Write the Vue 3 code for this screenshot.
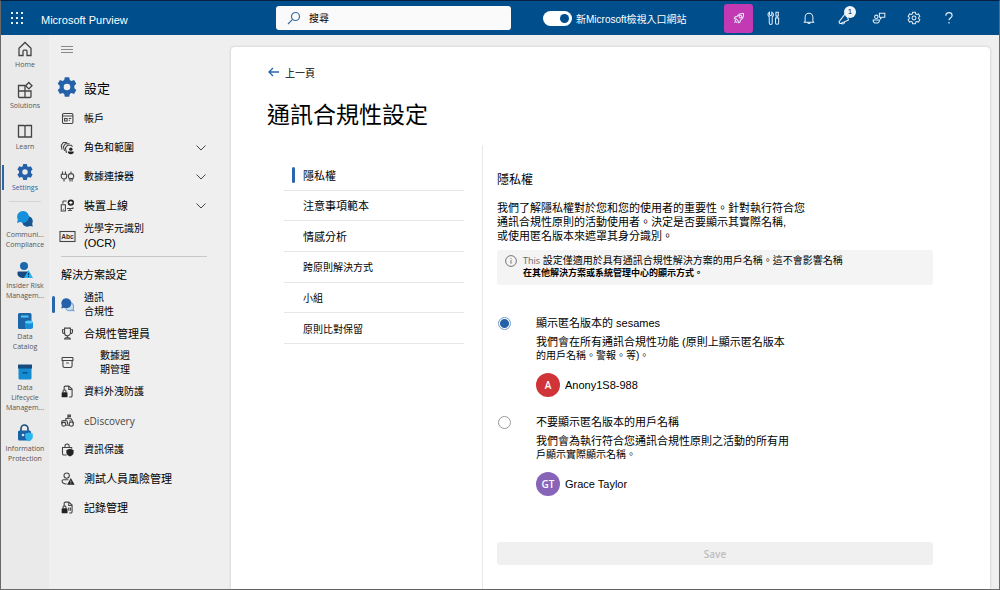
<script setup>
import { ref } from 'vue'

const icons = {
  home: '<path d="M3 8.200 9 2.500l6 5.700V15.500h-4v-4.300a1 1 0 0 0-1-1H8a1 1 0 0 0-1 1v4.300H3z"/>',
  solutions: '<path d="M2.500 4.500h6.500v12h-5.500a1 1 0 0 1-1-1zM2.500 10h6.500M9 10h6v5.500a1 1 0 0 1-1 1H9M9 10V8"/><path d="m12.800 1.500 3.200 3.200-3.200 3.200-3.200-3.200z"/>',
  learn: '<path d="M2.500 3.500H8a1 1 0 0 1 1 1v10.500H2.500zM9 4.500a1 1 0 0 1 1-1h5.500V15H9"/>',
  gear: '<g fill="#2461a8" stroke="none"><path fill-rule="evenodd" d="M7.200 1h3.600l.5 2.200 1.300.8 2.200-.7 1.800 3.100L15 8v2l1.600 1.500-1.800 3.200-2.200-.7-1.300.7-.5 2.300H7.200l-.5-2.300-1.300-.7-2.200.7-1.800-3.200L3 10V8L1.400 6.400l1.800-3.100 2.200.7 1.300-.8zM9 6.300a2.700 2.700 0 1 0 0 5.400 2.700 2.700 0 0 0 0-5.400z"/></g>',
  bubbles: '<g stroke="none"><path fill="#17568f" d="M11.500 6a5.300 5.300 0 0 1 4.700 7.700l.6 2.800-2.900-.6A5.300 5.300 0 1 1 11.500 6z"/><path fill="#1790dc" d="M7 1a5.900 5.900 0 1 1-2.700 11.100L1 13l.8-3.300A5.900 5.900 0 0 1 7 1z"/></g>',
  insider: '<g stroke="none"><circle cx="8" cy="5" r="4" fill="#1b69ad"/><path fill="#164a80" d="M2.500 10.500H13v3c0 2-2 3.500-5.200 3.500S1.500 15.500 1.500 13v-1.500a1 1 0 0 1 1-1z"/><path fill="#28b4ee" d="m12.500 9 4.500 8H8z"/><path d="M12.500 12v2.200M12.500 15v1" stroke="#083b63"/></g>',
  catalog: '<g stroke="none"><path fill="#1b65a8" d="M3.500 1H14a1.500 1.500 0 0 1 1.500 1.500V9H10v8H3.500A1.500 1.500 0 0 1 2 15.500v-13A1.500 1.500 0 0 1 3.500 1z"/><path fill="#50c8f4" d="M5 3.500h7.500v2H5z"/><path fill="#1590d8" d="M9 10v5.500c0 2 8 2 8 0V10z"/><ellipse cx="13" cy="10" rx="4" ry="1.600" fill="#54cdf6"/></g>',
  lifecycle: '<g stroke="none"><path fill="#158bd2" d="M2.500 5h13v10a1.500 1.500 0 0 1-1.500 1.500H4A1.500 1.500 0 0 1 2.500 15z"/><path fill="#174b7e" d="M2.500 1.500h13A.5.5 0 0 1 16 2v3.500H2V2a.5.5 0 0 1 .5-.5z"/><path fill="#0d4f86" d="M6.500 9h5v1.500h-5z"/></g>',
  protection: '<path d="M5 7V4.500a3.500 3.500 0 0 1 7 0V7" stroke="#174b7e" stroke-width="1.600"/><g stroke="none"><rect x="2" y="6.500" width="13" height="10" rx="1.500" fill="#1a62a5"/><circle cx="7" cy="11" r="1.300" fill="#cde9f8"/><path fill="#2db5ee" d="m13 8.500 3.800 1v3.500c0 2-1.800 3.500-3.800 4.300-2-.8-3.800-2.300-3.800-4.300V9.500z"/></g>',
  account: '<rect x="3" y="3" width="12.500" height="12" rx="1.500"/><path d="M3 6h12.500M5.500 9h3v3h-3zM10.500 9h3M10.500 11h1.500"/>',
  roles: '<path d="M2.500 11.500 1.500 6.500 4 3h4.500M5.500 13 4 8l2.500-3.500h5M8.500 14.500h-1L6.500 9.500 9 6.200h4.500L15 8"/><g fill="#222" stroke="none"><circle cx="13" cy="11" r="2"/><path d="M9.500 13.800h7c.3 2-1.300 3.400-3.500 3.400s-3.800-1.400-3.500-3.400z"/></g>',
  connectors: '<path d="M3 3v3M6.500 3v3M1.500 6.200h6.500V9c0 1.500-1.200 3-3.200 3S1.500 10.500 1.500 9zM4.800 12v3M13.200 3v2.500M10 9c0-2 1.200-3.500 3.200-3.500S16.500 7 16.500 9l-1 2.500h-4.500zM12 11.500V15M14.500 11.500V15"/>',
  devices: '<path d="M8 3.500H4.500a1 1 0 0 0-1 1V7M1.500 8h5v7.500h-5zM3.500 13.500h1M8.500 12.500h7v-1.500M12 12.500v2.500M9.500 15h5"/><circle cx="13" cy="5.500" r="3.800" fill="#222" stroke="none"/><path d="M13 3.500v4M11 5.500h4" stroke="#fff"/>',
  trophy: '<path d="M5.500 2.500h7v5.800a3.500 3.500 0 0 1-7 0zM5.500 4.500h-2.500v2c0 1.500 1 2.500 2.700 2.500M12.500 4.500H15v2c0 1.500-1 2.500-2.700 2.500M9 12v2.500M5.500 15.500c0-1 1-1.500 2-1.500h3c1 0 2 .5 2 1.500z"/>',
  archive: '<path d="M3 3h12a.5.5 0 0 1 .5.5v3h-13v-3A.5.500 0 0 1 3 3zM3.500 6.500h11V13a2 2 0 0 1-2 2h-7a2 2 0 0 1-2-2zM7.500 9.500h3"/>',
  dlp: '<path d="M5 8V4a1.500 1.500 0 0 1 1.500-1.500h4L14.500 6v8a1.500 1.500 0 0 1-1.500 1.500h-2M10.500 2.500v4h4M3.700 10V8.500a1.700 1.700 0 0 1 3.400 0V10"/><rect x="2" y="10" width="7" height="6" rx=".8" fill="#222" stroke="none"/>',
  ediscovery: '<path d="M2 13v-2.500c0-1 .8-1.500 2-1.500h3c1.500 0 2 .8 2 2v2.500M7 9V6.500h2.500l4 .5 3 5.500M9.500 6.500V2.500h3v1.800h-3M2.500 11h5M11 9.500h2.500"/><circle cx="4.500" cy="13.500" r="2.300"/><circle cx="13.500" cy="13.300" r="2.500"/><path d="M6.500 14.500H11"/>',
  infoProtect: '<path d="M8 15.500H4.500a1.500 1.500 0 0 1-1.500-1.500V6.500h11V8M6 6.500V4.800a2.500 2.500 0 0 1 5 0v1.700"/><path fill="#222" stroke="none" d="m12 8.200 4.300 1.300v3.500c0 2-2 3.500-4.300 4.400-2.300-.9-4.300-2.400-4.300-4.400V9.500z"/>',
  insiderLine: '<circle cx="8" cy="5.500" r="3.200"/><path d="M10 10.500H4A1.500 1.500 0 0 0 2.500 12c0 2.500 2.500 3.500 5.500 3.500"/><path fill="#222" stroke="none" d="m13 8.500 4.500 8h-9z"/><path d="M13 11.500v2.300M13 14.600v.9" stroke="#fff" stroke-width=".8"/>',
  records: '<path d="M5 8V4a1.500 1.500 0 0 1 1.500-1.500h4L14.500 6v8a1.500 1.500 0 0 1-1.500 1.500h-2M10.500 2.500v4h4M10.500 9v4M12.500 9v4M3.700 10V8.500a1.700 1.700 0 0 1 3.400 0V10"/><rect x="2" y="10" width="7" height="6" rx=".8" fill="#222" stroke="none"/>',
  navBubbles: '<path d="M12 6.500a5 5 0 0 1 3.800 7.200l.7 2.800-2.800-.7A5 5 0 0 1 7 14" stroke="#6ea0d2" fill="#c9ddef"/><path fill="#2461a8" stroke="none" d="M7.500 1.500a6 6 0 1 1-2.700 11.300L1.500 13.700l.8-3.200A6 6 0 0 1 7.500 1.500z"/>',
  abc: '<rect x="0" y="3" width="18" height="12" stroke-width="1.300"/>',
  rocket: '<path d="M14.800 3.200c-4-.4-6.600.8-8.500 4L4 7.500 3 9.800l2.500.4 2.300 2.300.4 2.500 2.300-1 .3-2.300c3.200-1.900 4.400-4.500 4-8.500zM3.500 12.500l1.500-1M3 15l2.500-2M5.500 15l1-1"/><circle cx="10.800" cy="7.200" r="1.700"/>',
  tools: '<path d="M3.200 1.500v3.500l1.500 1 1.500-1v-3.500c1.500.7 2.300 2.200 2 3.700-.2 1-.8 1.700-1.500 2.100V15.500a1.300 1.300 0 0 1-3.800 0V7.300C2 6.900 1.400 6.200 1.300 5.200c-.2-1.500.4-3 1.900-3.700zM11.500 1.500h3V6.500h-3zM13 6.500V9M11 9h4v6.500a1.500 1.500 0 0 1-1.500 1.500h-1a1.500 1.500 0 0 1-1.500-1.500z"/>',
  bell: '<path d="M4 13V8a5 5 0 0 1 10 0v5l1 1.500H3zM7.500 14.700a1.500 1.500 0 0 0 3 0"/>',
  megaphone: '<path d="M11 3 2.500 14l1.200 2.200L15 11.500M11 3l4 8.500M6 15.500c.3 1.800 4 1.500 3.800-1.500"/>',
  people: '<circle cx="5.500" cy="7.500" r="2.200"/><path d="M1.500 11.500h8c.3 2.600-1.500 4-4 4s-4.300-1.400-4-4zM9.500 3h7v5h-3.500L11 10V8H9.500z"/>',
  gearLine: '<path d="M7.300 1.500h3.400l.5 2.200 1.400.8 2.200-.7 1.700 3L15 8.200v1.600l1.500 1.400-1.700 3-2.200-.7-1.400.8-.5 2.200H7.300l-.5-2.200-1.400-.8-2.200.7-1.700-3L3 9.800V8.200L1.500 6.800l1.700-3 2.200.7 1.400-.8z"/><circle cx="9" cy="9" r="2.500"/>',
  help: '<path d="M5 6C5 3.500 6.700 2 9 2s4 1.500 4 3.700c0 3.300-4 3.300-4 6.300M9 14.200v1.800" stroke-width="1.500"/>'
}

const rail = [
  { icon: 'home', lines: ['Home'] },
  { icon: 'solutions', lines: ['Solutions'] },
  { icon: 'learn', lines: ['Learn'] },
  { icon: 'gear', lines: ['Settings'], active: true },
  { divider: true },
  { icon: 'bubbles', lines: ['Communi...', 'Compliance'] },
  { icon: 'insider', lines: ['Insider Risk', 'Managem...'] },
  { icon: 'catalog', lines: ['Data', 'Catalog'] },
  { icon: 'lifecycle', lines: ['Data', 'Lifecycle', 'Managem...'] },
  { icon: 'protection', lines: ['Information', 'Protection'] }
]

const general = [
  { icon: 'account', lines: ['帳戶'] },
  { icon: 'roles', lines: ['角色和範圍'], more: true },
  { icon: 'connectors', lines: ['數據連接器'], more: true },
  { icon: 'devices', lines: ['裝置上線'], more: true, wide: true },
  { icon: 'abc', lines: ['光學字元識別', '(OCR)'], tall: true }
]

const solutions = [
  { icon: 'navBubbles', lines: ['通訊', '合規性'], active: true },
  { icon: 'trophy', lines: ['合規性管理員'], wide: true },
  { icon: 'archive', lines: ['數據週', '期管理'], inset: true },
  { icon: 'dlp', lines: ['資料外洩防護'] },
  { icon: 'ediscovery', lines: ['eDiscovery'], latin: true },
  { icon: 'infoProtect', lines: ['資訊保護'] },
  { icon: 'insiderLine', lines: ['測試人員風險管理'], wide: true },
  { icon: 'records', lines: ['記錄管理'], wide: true }
]

const tabs = [
  { label: '隱私權', wide: true, active: true },
  { label: '注意事項範本', wide: true },
  { label: '情感分析', wide: true },
  { label: '跨原則解決方式' },
  { label: '小組' },
  { label: '原則比對保留' }
]

const actions = [
  { icon: 'rocket', label: 'Rocket', hot: true },
  { icon: 'tools', label: 'Tools' },
  { icon: 'bell', label: 'Notifications' },
  { icon: 'megaphone', label: 'News', badge: '1' },
  { icon: 'people', label: 'Feedback' },
  { icon: 'gearLine', label: 'Settings' },
  { icon: 'help', label: 'Help' }
]

const newPortal = ref(true)
const privacy = ref('anonymous')
</script>

<template>
  <div class="page">
    <header class="topbar">
      <button class="waffle" aria-label="App launcher">
        <svg width="12" height="12" viewBox="0 0 12 12" fill="#e6eff7">
          <template v-for="r in 3" :key="r">
            <rect v-for="c in 3" :key="c" :x="c * 5 - 5" :y="r * 5 - 5" width="2" height="2" />
          </template>
        </svg>
      </button>
      <span class="brand">Microsoft Purview</span>
      <label class="search">
        <svg width="14" height="14" viewBox="0 0 14 14" fill="none" stroke="#3a6ea5" stroke-width="1.200">
          <circle cx="8.500" cy="5.500" r="4" /><path d="M5.600 8.400 1 13" />
        </svg>
        <input type="search" placeholder="搜尋" aria-label="搜尋" />
      </label>
      <label class="portal">
        <input v-model="newPortal" type="checkbox" role="switch" class="switch" />
        <span>新Microsoft檢視入口網站</span>
      </label>
      <div class="actions">
        <button v-for="a in actions" :key="a.icon" class="action" :class="{ hot: a.hot }" :aria-label="a.label">
          <svg width="14" height="14" viewBox="0 0 18 18" class="line" v-html="icons[a.icon]" />
          <span v-if="a.badge" class="badge">{{ a.badge }}</span>
        </button>
      </div>
    </header>

    <div class="body">
      <nav class="rail" aria-label="Purview">
        <template v-for="(item, i) in rail" :key="i">
          <hr v-if="item.divider" class="rail-divider" />
          <a v-else href="#" class="rail-item" :class="{ active: item.active }">
            <svg width="18" height="18" viewBox="0 0 18 18" class="line" v-html="icons[item.icon]" />
            <span v-for="line in item.lines" :key="line">{{ line }}</span>
          </a>
        </template>
      </nav>

      <nav class="side" aria-label="設定">
        <button class="burger" aria-label="Menu"><i></i><i></i><i></i></button>
        <h2 class="side-title">
          <svg width="22" height="22" viewBox="0 0 18 18" v-html="icons.gear" />
          <span>設定</span>
        </h2>
        <a v-for="item in general" :key="item.icon" href="#" class="side-item" :class="{ wide: item.wide, tall: item.tall }">
          <svg width="15" height="15" viewBox="0 0 18 18" class="line">
            <g v-html="icons[item.icon]" />
            <text v-if="item.icon === 'abc'" x="9" y="12" class="abc">Abc</text>
          </svg>
          <span class="side-text"><span v-for="line in item.lines" :key="line">{{ line }}</span></span>
          <svg v-if="item.more" class="chevron" width="10" height="6" viewBox="0 0 10 6"><path d="m.5.500 4.500 4.500L9.500.5" /></svg>
        </a>
        <hr class="side-divider" />
        <h3 class="side-group">解決方案設定</h3>
        <a v-for="item in solutions" :key="item.icon" href="#" class="side-item" :class="{ wide: item.wide, active: item.active, inset: item.inset, latin: item.latin }">
          <svg width="15" height="15" viewBox="0 0 18 18" class="line" v-html="icons[item.icon]" />
          <span class="side-text"><span v-for="line in item.lines" :key="line">{{ line }}</span></span>
        </a>
      </nav>

      <main class="card">
        <a href="#" class="back">
          <svg width="11" height="10" viewBox="0 0 11 10" fill="none" stroke="#2a66ab" stroke-width="1.300"><path d="M11 5H1M5 1 1 5l4 4" /></svg>
          <span>上一頁</span>
        </a>
        <h1>通訊合規性設定</h1>
        <div class="columns">
          <ul class="tabs">
            <li v-for="t in tabs" :key="t.label">
              <a href="#" :class="{ wide: t.wide, active: t.active }">{{ t.label }}</a>
            </li>
          </ul>
          <form class="pane" @submit.prevent>
            <h2>隱私權</h2>
            <p class="intro">
              我們了解隱私權對於您和您的使用者的重要性。針對執行符合您<br />通訊合規性原則的活動使用者。決定是否要顯示其實際名稱,<br />或使用匿名版本來遮罩其身分識別。
            </p>
            <div class="note">
              <svg width="12" height="12" viewBox="0 0 12 12" fill="none" stroke="#777"><circle cx="6" cy="6" r="5.400" /><path d="M6 5.200v3.500M6 3.200v1" /></svg>
              <p><span class="this">This</span> 設定僅適用於具有通訊合規性解決方案的用戶名稱。這不會影響名稱<br /><b>在其他解決方案或系統管理中心的顯示方式。</b></p>
            </div>
            <div class="option">
              <input id="anon" v-model="privacy" type="radio" name="privacy" value="anonymous" />
              <div>
                <label for="anon">顯示匿名版本的 sesames</label>
                <p>我們會在所有通訊合規性功能 (原則上顯示匿名版本<span class="tight">的用戶名稱。警報。等)。</span></p>
                <div class="person"><span class="avatar red">A</span>Anony1S8-988</div>
              </div>
            </div>
            <div class="option">
              <input id="named" v-model="privacy" type="radio" name="privacy" value="named" />
              <div>
                <label for="named">不要顯示匿名版本的用戶名稱</label>
                <p>我們會為執行符合您通訊合規性原則之活動的所有用<span class="tight">戶顯示實際顯示名稱。</span></p>
                <div class="person"><span class="avatar purple">GT</span>Grace Taylor</div>
              </div>
            </div>
            <button type="submit" class="save" disabled>Save</button>
          </form>
        </div>
      </main>
    </div>
  </div>
</template>

<style>
body {
  margin: 0;
  background: #efefef;
}
</style>

<style scoped>
* {
  box-sizing: border-box;
}
.page {
  min-height: 100vh;
  display: flex;
  flex-direction: column;
  border: 1px solid #6a6a6a;
  border-top-color: #04213f;
  background: #efefef;
  color: #000;
  font-family: "Liberation Sans", "Noto Sans CJK TC", sans-serif;
  font-size: 11px;
}
button {
  font: inherit;
  border: 0;
  padding: 0;
  background: none;
}
a {
  color: inherit;
  text-decoration: none;
}
h1, h2, h3, p, ul {
  margin: 0;
  padding: 0;
  font-weight: 400;
  list-style: none;
}
.line {
  fill: none;
  stroke: currentColor;
  stroke-width: 1.300;
  overflow: visible;
}

.topbar {
  display: flex;
  align-items: center;
  height: 34px;
  padding-right: 36px;
  background: #004e8c;
  color: #fff;
}
.waffle {
  display: flex;
  width: 40px;
  padding-left: 10px;
}
.brand {
  width: 235px;
  padding-top: 4px;
}
.search {
  display: flex;
  align-items: center;
  gap: 8px;
  width: 235px;
  height: 24px;
  padding-left: 11px;
  border-radius: 3px;
  background: #fafafa;
}
.search input {
  flex: 1;
  min-width: 0;
  border: 0;
  padding: 0;
  outline: 0;
  background: none;
  font: inherit;
  font-size: 10px;
}
.search input::placeholder {
  color: #000;
  opacity: 1;
}
.portal {
  display: flex;
  align-items: center;
  gap: 4px;
  margin-left: 32px;
  font-size: 10px;
}
.switch {
  appearance: none;
  display: flex;
  align-items: center;
  justify-content: flex-start;
  width: 29px;
  height: 15px;
  margin: 0;
  padding: 0 3px;
  border-radius: 8px;
  background: #fff;
}
.switch::before {
  content: "";
  width: 9px;
  height: 9px;
  border-radius: 50%;
  background: #004e8c;
}
.switch:checked {
  justify-content: flex-end;
}
.actions {
  display: flex;
  gap: 6px;
  margin-left: auto;
}
.action {
  position: relative;
  display: flex;
  align-items: center;
  justify-content: center;
  width: 29px;
  height: 29px;
  border-radius: 3px;
  color: #e6eff7;
}
.action.hot {
  background: #c239b3;
}
.badge {
  position: absolute;
  top: 2px;
  right: 2px;
  width: 12px;
  height: 12px;
  border-radius: 50%;
  background: #eef5fb;
  color: #222;
  font-size: 8px;
  line-height: 12px;
}

.body {
  flex: 1;
  display: flex;
}
.rail {
  width: 48px;
  flex: none;
  display: flex;
  flex-direction: column;
  gap: 11px;
  padding-top: 5px;
  background: #eaeaea;
}
.rail-item {
  position: relative;
  display: flex;
  flex-direction: column;
  align-items: center;
  color: #555;
  font-family: "Open Sans", sans-serif;
  font-size: 7px;
  line-height: 10px;
  white-space: nowrap;
}
.rail-item svg {
  margin-bottom: 2px;
  color: #444;
}
.rail-item.active {
  color: #2461a8;
}
.rail-item.active::before {
  content: "";
  position: absolute;
  left: 1px;
  top: 2px;
  width: 2px;
  height: 25px;
  background: #2a66ab;
}
.rail-divider {
  width: 32px;
  height: 1px;
  margin: -3px auto;
  border: 0;
  background: #d4d4d4;
}

.side {
  width: 182px;
  flex: none;
  padding: 11px 24px 0 12px;
}
.burger {
  display: flex;
  flex-direction: column;
  gap: 2px;
  width: 12px;
}
.burger i {
  height: 1px;
  background: #888;
}
.side-title {
  display: flex;
  align-items: center;
  gap: 6px;
  height: 30px;
  margin: 19px 0 2px -5px;
  font-size: 13px;
}
.side-item {
  position: relative;
  display: flex;
  align-items: center;
  gap: 9px;
  height: 29px;
  margin-left: -1px;
  padding-right: 1px;
  font-size: 10px;
  line-height: 14px;
}
.side-item.wide {
  font-size: 11px;
}
.side-item.tall {
  height: 32px;
  line-height: 15px;
}
.side-item svg {
  flex: none;
  color: #444;
}
.side-item.tall .side-text span:last-child {
  font-size: 11px;
}
.side-item.inset .side-text {
  padding-left: 16px;
}
.side-item.latin {
  color: #444;
  font-family: "Open Sans", sans-serif;
}
.side-item.active::before {
  content: "";
  position: absolute;
  left: -8px;
  top: 6px;
  width: 3px;
  height: 17px;
  border-radius: 2px;
  background: #2a66ab;
}
.side-text {
  display: flex;
  flex-direction: column;
}
.chevron {
  margin-left: auto;
  fill: none;
  stroke: currentColor;
}
.abc {
  fill: #333;
  stroke: none;
  font-size: 8px;
  font-weight: 700;
  text-anchor: middle;
}
.side-divider {
  height: 1px;
  margin: 4px 0 0;
  border: 0;
  background: #c8c8c8;
}
.side-group {
  padding-top: 3px;
  font-size: 11px;
  line-height: 30px;
}

.card {
  flex: 1;
  min-width: 0;
  display: flex;
  flex-direction: column;
  margin: 12px 9px 0 0;
  padding: 17px 0 0 36px;
  border-radius: 4px 4px 0 0;
  background: #fff;
  box-shadow: 0 0 3px #00000030;
}
.back {
  display: flex;
  align-items: center;
  gap: 6px;
  height: 16px;
  padding-left: 1px;
  font-size: 10px;
}
h1 {
  margin-top: 19px;
  font-size: 23px;
  line-height: 32px;
}
.columns {
  flex: 1;
  display: flex;
  margin-top: 14px;
}
.tabs {
  display: grid;
  grid-auto-rows: 1fr;
  width: 180px;
  height: 184px;
  flex: none;
  margin: 15px 18px 0 17px;
}
.tabs li {
  display: flex;
  align-items: center;
  border-bottom: 1px solid #e6e6e6;
}
.tabs a {
  position: relative;
  padding-left: 19px;
  font-size: 10px;
}
.tabs a.wide {
  font-size: 11px;
}
.tabs a.active::before {
  content: "";
  position: absolute;
  left: 8px;
  top: 0;
  width: 3px;
  height: 16px;
  border-radius: 2px;
  background: #2a66ab;
}
.pane {
  flex: 1;
  min-width: 0;
  padding: 27px 57px 20px 14px;
  border-left: 1px solid #e8e8e8;
  line-height: 14px;
}
.pane h2 {
  font-size: 12px;
  line-height: 16px;
}
.intro {
  margin: 13px 0 7px;
}
.note {
  display: flex;
  gap: 6px;
  padding: 5px 8px 6px;
  border-radius: 3px;
  background: #f4f4f4;
  font-size: 10px;
  line-height: 12px;
}
.note svg {
  flex: none;
}
.note b {
  font-size: 9px;
}
.this {
  color: #666;
  font-family: "Open Sans", sans-serif;
  font-size: 9px;
}
.option {
  display: flex;
  gap: 25px;
  margin-top: 17px;
  padding-left: 1px;
}
.note + .option {
  margin-top: 30px;
}
.option input {
  appearance: none;
  flex: none;
  width: 13px;
  height: 13px;
  margin: 2px 0 0;
  border: 1px solid #999;
  border-radius: 50%;
  background: #fff;
}
.option input:checked {
  border-color: #6f9bcb;
  background: radial-gradient(circle, #2461a8 4px, #fff 5px);
}
.option label {
  display: block;
  line-height: 16px;
}
.option p {
  margin: 4px 0 10px;
}
.tight {
  display: block;
  font-size: 10px;
}
.person {
  display: flex;
  align-items: center;
  gap: 5px;
}
.avatar {
  width: 24px;
  height: 24px;
  border-radius: 50%;
  color: #fff;
  font-family: "Open Sans", sans-serif;
  font-size: 10px;
  font-weight: 600;
  line-height: 24px;
  text-align: center;
}
.red {
  background: #d13438;
}
.purple {
  background: #8764b8;
}
.save {
  width: 100%;
  height: 23px;
  margin-top: 46px;
  border-radius: 3px;
  background: #f0f0f0;
  color: #bdbdbd;
  font-family: "Open Sans", sans-serif;
  font-size: 10px;
  font-weight: 600;
}
</style>
